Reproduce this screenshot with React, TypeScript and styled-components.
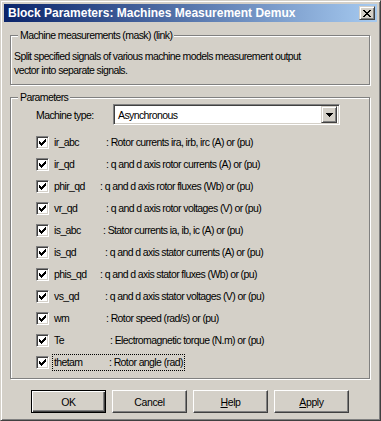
import React from 'react';
import styled, { createGlobalStyle } from 'styled-components';

const face = '#d4d0c8';
const shadow = '#808080';
const darkShadow = '#404040';
const uiFont = `"Liberation Sans", Arial, sans-serif`;

const GlobalStyle = createGlobalStyle`
  html, body {
    margin: 0;
    padding: 0;
    background: ${face};
  }
  body {
    font-family: ${uiFont};
    font-size: 10.5px;
    letter-spacing: -0.6px;
    color: #000;
  }
`;

interface PixelArtProps {
  rows: string[];
  color?: string;
}

// tiny bitmap glyphs (close cross, check mark, combo arrow) drawn pixel by pixel
function PixelArt({ rows, color = '#000' }: PixelArtProps) {
  const width = rows[0].length;
  return (
    <svg width={width} height={rows.length} viewBox={`0 0 ${width} ${rows.length}`} shapeRendering="crispEdges">
      {rows.map((row, y) =>
        row.split('').map((c, x) => (c === 'x' ? <rect key={`${x}-${y}`} x={x} y={y} width={1} height={1} fill={color} /> : null))
      )}
    </svg>
  );
}

const CLOSE_GLYPH = ['xx....xx', '.xx..xx.', '..xxxx..', '...xx...', '..xxxx..', '.xx..xx.', 'xx....xx'];
const CHECK_GLYPH = ['......x', '.....xx', 'x...xxx', 'xx.xxx.', 'xxxxx..', '.xxx...', '..x....'];
const ARROW_GLYPH = ['xxxxxxx', '.xxxxx.', '..xxx..', '...x...'];

const Window = styled.div`
  box-sizing: border-box;
  width: 381px;
  height: 421px;
  border: 1px solid;
  border-color: ${face} ${darkShadow} ${darkShadow} ${face};
  box-shadow: inset 1px 1px 0 #fff, inset -1px -1px 0 ${shadow};
  padding: 3px;
  display: flex;
  flex-direction: column;
  background: ${face};
`;

const TitleBar = styled.div`
  height: 18px;
  flex: none;
  display: flex;
  align-items: center;
  justify-content: space-between;
  padding: 0 2px 0 4px;
  background: linear-gradient(to right, #0a246a, #a6caf0);
`;

const Title = styled.span`
  color: #fff;
  font-weight: bold;
  font-size: 12px;
  letter-spacing: 0;
  white-space: nowrap;
`;

const CaptionButton = styled.div`
  box-sizing: border-box;
  width: 16px;
  height: 14px;
  display: flex;
  align-items: center;
  justify-content: center;
  background: ${face};
  border: 1px solid;
  border-color: ${face} ${darkShadow} ${darkShadow} ${face};
  box-shadow: inset 1px 1px 0 #fff, inset -1px -1px 0 ${shadow};
`;

const Body = styled.div`
  flex: 1;
  display: flex;
  flex-direction: column;
  padding: 0 7px 0 6px;
`;

const Group = styled.div<{ $top: number }>`
  position: relative;
  margin-top: ${(p) => p.$top}px;
  border: 1px solid ${shadow};
  box-shadow: inset 1px 1px 0 #fff, 1px 1px 0 #fff;
`;

const GroupLabel = styled.span`
  position: absolute;
  top: -7px;
  left: 7px;
  padding: 0 2px;
  line-height: 13px;
  background: ${face};
  white-space: nowrap;
`;

const Description = styled.p`
  margin: 0;
  padding: 13px 4px 7px 3px;
  line-height: 14px;
`;

const ParamsBody = styled.div`
  padding: 6px 0 5px 25px;
  display: flex;
  flex-direction: column;
`;

const TypeRow = styled.div`
  display: flex;
  align-items: center;
  height: 21px;
  margin-bottom: 6px;
`;

const FieldLabel = styled.span`
  width: 77px;
  flex: none;
`;

const Select = styled.div`
  box-sizing: border-box;
  width: 227px;
  height: 21px;
  display: flex;
  align-items: center;
  background: #fff;
  border: 1px solid;
  border-color: ${shadow} #fff #fff ${shadow};
  box-shadow: inset 1px 1px 0 ${darkShadow}, inset -1px -1px 0 ${face};
  padding: 2px;
`;

const SelectValue = styled.span`
  flex: 1;
  padding-left: 2px;
`;

const ArrowButton = styled(CaptionButton)`
  width: 16px;
  height: 17px;
`;

const CheckRow = styled.div`
  height: 22px;
  display: flex;
  align-items: center;
`;

const CheckBox = styled.span`
  box-sizing: border-box;
  width: 13px;
  height: 13px;
  flex: none;
  display: flex;
  align-items: center;
  justify-content: center;
  background: #fff;
  border: 1px solid;
  border-color: ${shadow} #fff #fff ${shadow};
  box-shadow: inset 1px 1px 0 ${darkShadow}, inset -1px -1px 0 ${face};
`;

const CheckLabel = styled.span<{ $focused?: boolean }>`
  display: flex;
  align-items: center;
  margin-left: 4px;
  padding: 0 1px;
  height: 15px;
  outline: ${(p) => (p.$focused ? '1px dotted #000' : 'none')};
  white-space: nowrap;
`;

const SignalName = styled.span<{ $width: number }>`
  width: ${(p) => p.$width}px;
  flex: none;
`;

const ButtonBar = styled.div`
  display: flex;
  justify-content: center;
  gap: 6px;
  margin-top: 11px;
`;

const Button = styled.button<{ $default?: boolean }>`
  box-sizing: border-box;
  width: 75px;
  height: 23px;
  padding: 0;
  font-family: ${uiFont};
  font-size: 10.5px;
  letter-spacing: -0.4px;
  color: #000;
  background: ${face};
  border: 1px solid;
  border-color: ${(p) => (p.$default ? '#000' : `#fff ${darkShadow} ${darkShadow} #fff`)};
  box-shadow: ${(p) =>
    p.$default
      ? `inset 1px 1px 0 #fff, inset -1px -1px 0 ${darkShadow}, inset -2px -2px 0 ${shadow}`
      : `inset -1px -1px 0 ${shadow}`};
`;

const signals = [
  { name: 'ir_abc', desc: ': Rotor currents ira, irb, irc (A) or (pu)', width: 52 },
  { name: 'ir_qd', desc: ': q and d axis rotor currents (A) or (pu)', width: 52 },
  { name: 'phir_qd', desc: ': q and d axis rotor fluxes (Wb) or (pu)', width: 46 },
  { name: 'vr_qd', desc: ': q and d axis rotor voltages (V) or (pu)', width: 52 },
  { name: 'is_abc', desc: ': Stator currents ia, ib, ic (A) or (pu)', width: 49 },
  { name: 'is_qd', desc: ': q and d axis stator currents (A) or (pu)', width: 51 },
  { name: 'phis_qd', desc: ': q and d axis stator fluxes (Wb) or (pu)', width: 46 },
  { name: 'vs_qd', desc: ': q and d axis stator voltages (V) or (pu)', width: 51 },
  { name: 'wm', desc: ': Rotor speed (rad/s) or (pu)', width: 52 },
  { name: 'Te', desc: ': Electromagnetic torque (N.m) or (pu)', width: 56 },
  { name: 'thetam', desc: ': Rotor angle (rad)', width: 55 },
];

export default function App() {
  return (
    <>
      <GlobalStyle />
      <Window>
        <TitleBar>
          <Title>Block Parameters: Machines Measurement Demux</Title>
          <CaptionButton aria-label="Close">
            <PixelArt rows={CLOSE_GLYPH} />
          </CaptionButton>
        </TitleBar>
        <Body>
          <Group $top={13}>
            <GroupLabel>Machine measurements (mask) (link)</GroupLabel>
            <Description>
              Split specified signals of various machine models measurement output
              <br />
              vector into separate signals.
            </Description>
          </Group>
          <Group $top={12}>
            <GroupLabel>Parameters</GroupLabel>
            <ParamsBody>
              <TypeRow>
                <FieldLabel>Machine type:</FieldLabel>
                <Select>
                  <SelectValue>Asynchronous</SelectValue>
                  <ArrowButton>
                    <PixelArt rows={ARROW_GLYPH} />
                  </ArrowButton>
                </Select>
              </TypeRow>
              {signals.map((s, i) => (
                <CheckRow key={s.name}>
                  <CheckBox>
                    <PixelArt rows={CHECK_GLYPH} />
                  </CheckBox>
                  <CheckLabel $focused={i === signals.length - 1}>
                    <SignalName $width={s.width}>{s.name}</SignalName>
                    {s.desc}
                  </CheckLabel>
                </CheckRow>
              ))}
            </ParamsBody>
          </Group>
          <ButtonBar>
            <Button $default>OK</Button>
            <Button>Cancel</Button>
            <Button>
              <u>H</u>elp
            </Button>
            <Button>
              <u>A</u>pply
            </Button>
          </ButtonBar>
        </Body>
      </Window>
    </>
  );
}
